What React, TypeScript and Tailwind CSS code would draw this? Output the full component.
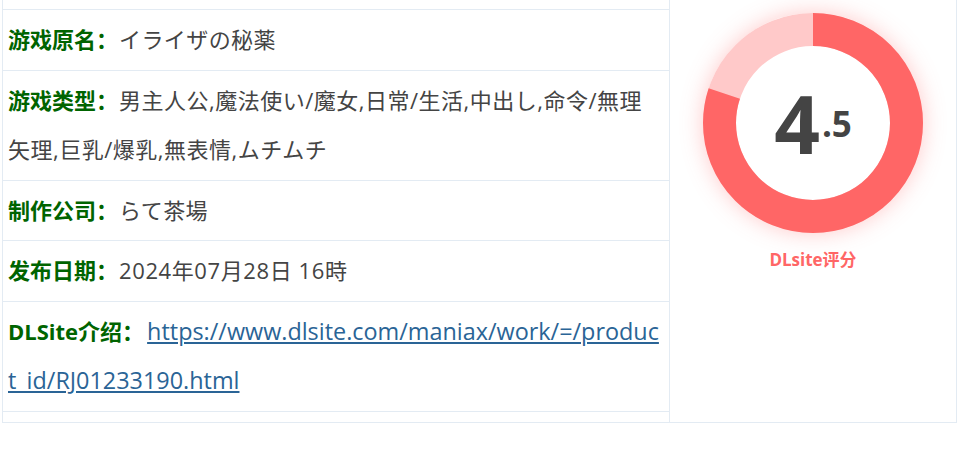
import React from "react";

const font = { fontFamily: '"Open Sans","Noto Sans CJK SC","Noto Sans CJK JP",sans-serif' };

function Row({ label, children }: { label: string; children: React.ReactNode }) {
  return (
    <div className="border-b border-[#e3ebf3] px-[5px] py-[5px] text-[22px] leading-[49.5px] text-[#444] break-all">
      <strong className="font-bold text-[#006400]">{label}：</strong>
      {children}
    </div>
  );
}

export default function App() {
  const r = 93.5;
  const c = 2 * Math.PI * r;
  return (
    <div className="bg-white w-[961px] h-[474px] overflow-hidden" style={font}>
      <div className="ml-[2px] w-[955px] flex border-x border-b border-[#e3ebf3]">
        <div className="w-[667px] shrink-0 border-r border-[#e3ebf3] pb-[10px]">
          <div className="h-[10px] border-b border-[#e3ebf3]" />
          <Row label="游戏原名">
            <span className="tracking-[0.4px] ml-[1px]">イライザの秘薬</span>
          </Row>
          <Row label="游戏类型">
            <span className="tracking-[0.5px] ml-[1px]">
              男主人公,魔法使い/魔女,日常/生活,中出し,命令/無理
              <br />
              矢理,巨乳/爆乳,無表情,ムチムチ
            </span>
          </Row>
          <Row label="制作公司">
            <span className="tracking-[0.4px] ml-[1px]">らて茶場</span>
          </Row>
          <Row label="发布日期">
            <span className="tracking-[0.6px] ml-[1px]">2024年07月28日 16時</span>
          </Row>
          <Row label="DLSite介绍">
            <a href="#" className="text-[#2a6496] underline text-[23.4px] ml-[3px]">
              https://www.dlsite.com/maniax/work/=/produc
              <br />
              t_id/RJ01233190.html
            </a>
          </Row>
        </div>
        <div className="flex-1 flex flex-col items-center pt-[13px]">
          <div className="relative w-[220px] h-[220px] rounded-full shadow-[0_0_22px_rgba(255,102,102,0.35)]">
            <svg width="220" height="220" viewBox="0 0 220 220" className="absolute inset-0">
              <circle cx="110" cy="110" r={r} fill="none" stroke="#ffc9c9" strokeWidth="33" />
              <circle
                cx="110"
                cy="110"
                r={r}
                fill="none"
                stroke="#ff6666"
                strokeWidth="33"
                strokeDasharray={`${c * 0.8} ${c}`}
                transform="rotate(-90 110 110)"
              />
            </svg>
            <div className="absolute inset-0 flex items-center justify-center text-[#444] font-bold">
              <span className="text-[80px] leading-none mr-[2px]">4</span>
              <span className="text-[35px] leading-none">.5</span>
            </div>
          </div>
          <div className="mt-[15px] text-[17px] leading-[24px] font-bold text-[#ff6666]">
            DLsite评分
          </div>
        </div>
      </div>
    </div>
  );
}
